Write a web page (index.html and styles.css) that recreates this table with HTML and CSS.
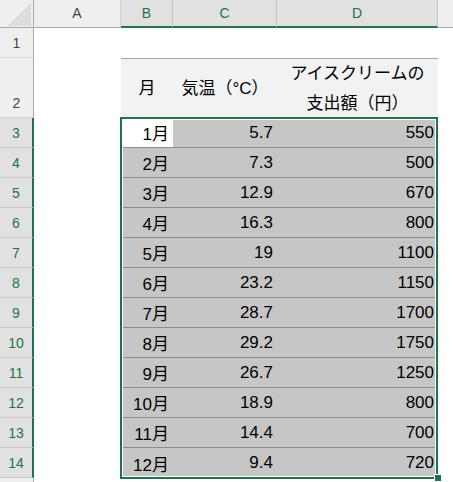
FILE: index.html
```html
<!DOCTYPE html>
<html lang="ja">
<head>
<meta charset="utf-8">
<title>Sheet</title>
<link rel="stylesheet" href="styles.css">
</head>
<body>
<div class="sheet">
  <div class="corner"><svg class="tri" width="23" height="23" viewBox="0 0 23 23"><polygon points="23,0 23,23 0,23" fill="#dcdcdc"/></svg></div>
  <div class="ch">A</div>
  <div class="ch sel">B</div>
  <div class="ch sel">C</div>
  <div class="ch sel">D</div>
  <div class="ch rest"></div>

  <div class="rh">1</div>
  <div class="cell"></div><div class="cell"></div><div class="cell"></div><div class="cell"></div><div class="cell"></div>

  <div class="rh">2</div>
  <div class="cell"></div>
  <div class="th">月</div>
  <div class="th">気温（°C）</div>
  <div class="th">アイスクリームの<br>支出額（円）</div>
  <div class="cell"></div>

  <div class="rh sel">3</div><div class="cell"></div><div class="td active">1月</div><div class="td">5.7</div><div class="td">550</div><div class="cell"></div>
  <div class="rh sel">4</div><div class="cell"></div><div class="td">2月</div><div class="td">7.3</div><div class="td">500</div><div class="cell"></div>
  <div class="rh sel">5</div><div class="cell"></div><div class="td">3月</div><div class="td">12.9</div><div class="td">670</div><div class="cell"></div>
  <div class="rh sel">6</div><div class="cell"></div><div class="td">4月</div><div class="td">16.3</div><div class="td">800</div><div class="cell"></div>
  <div class="rh sel">7</div><div class="cell"></div><div class="td">5月</div><div class="td">19</div><div class="td">1100</div><div class="cell"></div>
  <div class="rh sel">8</div><div class="cell"></div><div class="td">6月</div><div class="td">23.2</div><div class="td">1150</div><div class="cell"></div>
  <div class="rh sel">9</div><div class="cell"></div><div class="td">7月</div><div class="td">28.7</div><div class="td">1700</div><div class="cell"></div>
  <div class="rh sel">10</div><div class="cell"></div><div class="td">8月</div><div class="td">29.2</div><div class="td">1750</div><div class="cell"></div>
  <div class="rh sel">11</div><div class="cell"></div><div class="td">9月</div><div class="td">26.7</div><div class="td">1250</div><div class="cell"></div>
  <div class="rh sel">12</div><div class="cell"></div><div class="td">10月</div><div class="td">18.9</div><div class="td">800</div><div class="cell"></div>
  <div class="rh sel">13</div><div class="cell"></div><div class="td">11月</div><div class="td">14.4</div><div class="td">700</div><div class="cell"></div>
  <div class="rh sel">14</div><div class="cell"></div><div class="td last">12月</div><div class="td last">9.4</div><div class="td last">720</div><div class="cell"></div>

  <div class="rh"></div>
  <div class="cell"></div><div class="cell"></div><div class="cell"></div><div class="cell"></div><div class="cell"></div>

  <div class="selection"><span class="handle"></span></div>
</div>
</body>
</html>
```

FILE: styles.css
```css
html, body {
  margin: 0;
  padding: 0;
  background: #fff;
}

body {
  font-family: "Liberation Sans", "Noto Sans CJK JP", sans-serif;
  color: #000;
}

.sheet {
  position: relative;
  width: 453px;
  height: 482px;
  overflow: hidden;
  display: grid;
  grid-template-columns: 34px 87px 52px 104px 161px 1fr;
  grid-template-rows: 28px 30px 60px repeat(12, 30px) 1fr;
}

.sheet > div {
  box-sizing: border-box;
  min-width: 0;
}

.corner {
  background: #efefef;
  border-right: 1px solid #ababab;
  border-bottom: 1px solid #ababab;
}

.tri {
  display: block;
  margin: 3px 0 0 8px;
}

.ch {
  background: #efefef;
  border-right: 1px solid #d0d0d0;
  border-bottom: 1px solid #ababab;
  color: #444;
  font-size: 14px;
  display: flex;
  justify-content: center;
  padding-top: 5px;
}

.ch.sel {
  background: #e1e1e1;
  color: #217346;
  border-bottom: 2px solid #217346;
  border-right-color: #c4c4c4;
}

.ch.rest {
  border-right: none;
}

.rh {
  background: #efefef;
  border-right: 1px solid #ababab;
  border-bottom: 1px solid #d4d4d4;
  color: #444;
  font-size: 14px;
  display: flex;
  justify-content: center;
  align-items: flex-end;
  padding-bottom: 6px;
}

.rh.sel {
  background: #e1e1e1;
  color: #217346;
  border-right: 2px solid #217346;
  border-bottom-color: #c8c8c8;
}

.th {
  background: #f2f2f2;
  border-top: 1px solid #a6a6a6;
  display: flex;
  align-items: center;
  justify-content: center;
  text-align: center;
  font-size: 17px;
  line-height: 30px;
  white-space: nowrap;
}

.td {
  background: #c6c6c6;
  border-bottom: 1px solid #8c8c8c;
  display: flex;
  align-items: center;
  justify-content: flex-end;
  padding-right: 4px;
  font-size: 17px;
  white-space: nowrap;
}

.td.active {
  background: #fff;
}

.td.last {
  border-bottom: none;
}

.selection {
  position: absolute;
  left: 120px;
  top: 117px;
  width: 318px;
  height: 362px;
  box-sizing: border-box;
  border: 2px solid #217346;
  box-shadow: inset 0 0 0 1px #fff;
  pointer-events: none;
}

.handle {
  position: absolute;
  right: -6px;
  bottom: -5px;
  width: 6px;
  height: 6px;
  background: #217346;
  border: 1px solid #fff;
}
```
